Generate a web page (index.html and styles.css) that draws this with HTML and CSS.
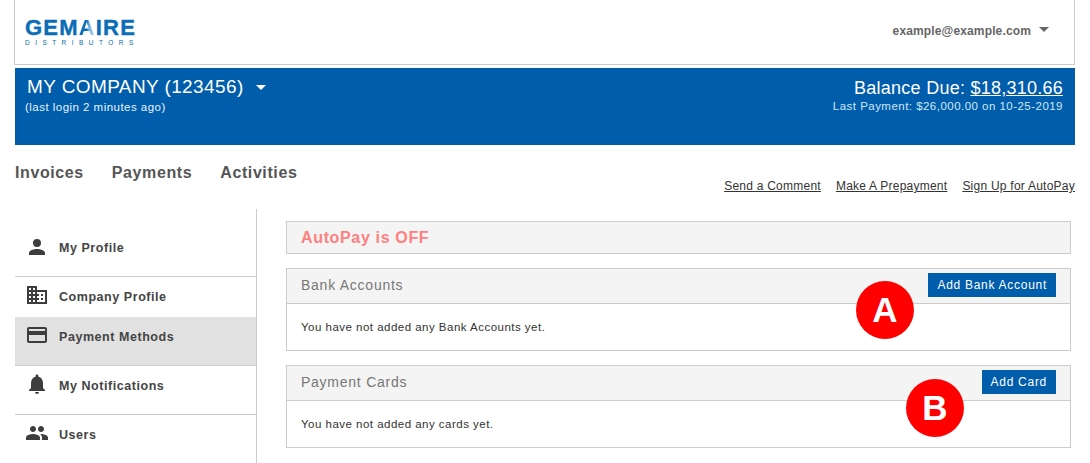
FILE: index.html
```html
<!DOCTYPE html>
<html lang="en">
<head>
<meta charset="utf-8">
<title>Payment Methods</title>
<link rel="stylesheet" href="styles.css">
</head>
<body>
<div class="page">
  <header class="topbar">
    <div class="logo">
      <div class="logo-main">GEM<span class="logo-a">A</span>IRE</div>
      <div class="logo-sub">DISTRIBUTORS</div>
    </div>
    <div class="user">example@example.com<span class="caret caret-grey"></span></div>
  </header>
  <section class="banner">
    <div>
      <div class="company">MY COMPANY (123456)<span class="caret caret-white"></span></div>
      <div class="login">(last login 2 minutes ago)</div>
    </div>
    <div class="balance">
      <div class="due">Balance Due: <a href="#">$18,310.66</a></div>
      <div class="last">Last Payment: $26,000.00 on 10-25-2019</div>
    </div>
  </section>
  <nav class="tabs">
    <div class="tab-list">
      <span>Invoices</span><span>Payments</span><span>Activities</span>
    </div>
    <div class="links">
      <a href="#">Send a Comment</a><a href="#">Make A Prepayment</a><a href="#">Sign Up for AutoPay</a>
    </div>
  </nav>
  <div class="content">
    <aside class="side">
      <div class="item item-profile">
        <svg class="icon" viewBox="0 0 24 24"><path d="M12 12a4 4 0 1 0 0-8 4 4 0 0 0 0 8zm0 2c-2.7 0-8 1.3-8 4v2h16v-2c0-2.7-5.300-4-8-4z"/></svg>
        <span>My Profile</span>
      </div>
      <div class="item item-company">
        <svg class="icon" viewBox="0 0 24 24"><path d="M12 7V3H2v18h20V7H12zM6 19H4v-2h2v2zm0-4H4v-2h2v2zm0-4H4V9h2v2zm0-4H4V5h2v2zm4 12H8v-2h2v2zm0-4H8v-2h2v2zm0-4H8V9h2v2zm0-4H8V5h2v2zm10 12h-8v-2h2v-2h-2v-2h2v-2h-2V9h8v10zm-2-8h-2v2h2v-2zm0 4h-2v2h2v-2z"/></svg>
        <span>Company Profile</span>
      </div>
      <div class="item item-payment">
        <svg class="icon" viewBox="0 0 24 24"><path d="M20 4H4c-1.110 0-2 .89-2 2v12c0 1.110.89 2 2 2h16c1.110 0 2-.89 2-2V6c0-1.110-.89-2-2-2zm0 14H4v-6h16v6zm0-10H4V6h16v2z"/></svg>
        <span>Payment Methods</span>
      </div>
      <div class="item item-notify">
        <svg class="icon" viewBox="0 0 24 24"><path d="M12 22c1.100 0 2-.9 2-2h-4c0 1.100.9 2 2 2zm6-6v-5c0-3.070-1.630-5.640-4.500-6.320V4c0-.83-.67-1.500-1.500-1.500s-1.500.67-1.500 1.500v.68C7.640 5.360 6 7.920 6 11v5l-2 2v1h16v-1l-2-2z"/></svg>
        <span>My Notifications</span>
      </div>
      <div class="item item-users">
        <svg class="icon" viewBox="0 0 24 24"><path d="M16 11c1.660 0 2.990-1.340 2.990-3S17.660 5 16 5s-3 1.340-3 3 1.340 3 3 3zm-8 0c1.660 0 2.990-1.340 2.990-3S9.660 5 8 5 5 6.340 5 8s1.340 3 3 3zm0 2c-2.330 0-7 1.170-7 3.500V19h14v-2.500c0-2.330-4.670-3.500-7-3.500zm8 0c-.29 0-.62.02-.97.050 1.160.84 1.970 1.970 1.970 3.450V19h6v-2.500c0-2.330-4.670-3.500-7-3.500z"/></svg>
        <span>Users</span>
      </div>
    </aside>
    <main class="main">
      <div class="autopay">AutoPay is OFF</div>
      <section class="panel">
        <div class="panel-head">
          <h2>Bank Accounts</h2>
          <button class="btn">Add Bank Account</button>
        </div>
        <p class="panel-body">You have not added any Bank Accounts yet.</p>
      </section>
      <section class="panel">
        <div class="panel-head">
          <h2>Payment Cards</h2>
          <button class="btn">Add Card</button>
        </div>
        <p class="panel-body">You have not added any cards yet.</p>
      </section>
    </main>
  </div>
  <div class="marker marker-a">A</div>
  <div class="marker marker-b">B</div>
</div>
</body>
</html>
```
FILE: styles.css
```css
* { box-sizing: border-box; }
html, body { margin: 0; height: 463px; overflow: hidden; background: #fff; }
body { font-family: "Liberation Sans", Arial, sans-serif; color: #444; }
.page { position: relative; height: 463px; padding-right: 15px; padding-left: 15px; }

.topbar {
  height: 65px;
  margin-left: -1px;
  border: 1px solid #ccc;
  border-top: 0;
  display: flex;
  justify-content: space-between;
  padding: 20px 25px 0 10px;
}
.logo { color: #0a6db5; width: 112px; }
.logo-main { font-size: 22px; font-weight: 700; line-height: 15px; letter-spacing: 1.2px; white-space: nowrap; -webkit-text-stroke: .4px #0a6db5; }
.logo-a {
  background: linear-gradient(90deg, #0a6db5 0 45%, #6fb4e4 60%, #c9e3f5 100%);
  -webkit-background-clip: text;
  background-clip: text;
  color: transparent;
  -webkit-text-stroke: 0;
}
.logo-sub { font-size: 6.5px; line-height: 7px; margin-top: 4px; letter-spacing: 5.45px; white-space: nowrap; }
.user { font-size: 12px; font-weight: 700; color: #666; letter-spacing: .14px; line-height: 14px; padding-top: 4px; }
.caret { display: inline-block; width: 0; height: 0; border-left: 5px solid transparent; border-right: 5px solid transparent; }
.caret-grey { border-top: 5px solid #666; margin-left: 8px; vertical-align: 3px; }
.caret-white { border-top: 5px solid #fff; margin-left: 12px; vertical-align: 3px; }

.banner {
  height: 77px;
  margin-top: 3px;
  background: #005dab;
  color: #fff;
  display: flex;
  justify-content: space-between;
  padding: 8px 12px 0 12px;
}
.company { font-size: 19px; line-height: 21px; letter-spacing: .4px; }
.login { font-size: 11.500px; line-height: 14px; margin-top: 3px; letter-spacing: .47px; margin-left: -2px; color: #e6f3fb; }
.balance { text-align: right; }
.due { font-size: 18px; line-height: 24px; letter-spacing: .25px; }
.due a { color: #fff; }
.last { font-size: 11.500px; line-height: 13px; letter-spacing: .47px; color: #cfe8f8; }

.tabs { display: flex; justify-content: space-between; align-items: flex-start; padding-top: 18px; height: 64px; }
.tab-list { display: flex; gap: 28px; font-size: 16px; font-weight: 700; line-height: 19px; letter-spacing: .6px; color: #555; }
.links { display: flex; gap: 15px; font-size: 12px; line-height: 14px; letter-spacing: .24px; padding-top: 16px; }
.links a { color: #333; }

.content { display: flex; }
.side { width: 242px; height: 254px; border-right: 1px solid #ccc; flex: none; }
.item { display: flex; align-items: flex-start; font-size: 12.500px; font-weight: 700; letter-spacing: .55px; color: #444; border-bottom: 1px solid #ccc; }
.item span { line-height: 15px; margin-left: 10px; }
.icon { width: 24px; height: 24px; fill: #3d3d3d; flex: none; margin-left: 10px; }
.item-profile { height: 68px; padding-top: 26px; }
.item-profile span { padding-top: 6px; }
.item-company { height: 40px; padding-top: 6px; border-bottom: 0; }
.item-company span { padding-top: 7px; }
.item-payment { height: 49px; padding-top: 6px; background: #e1e1e1; }
.item-payment span { padding-top: 7px; }
.item-notify { height: 49px; padding-top: 6px; }
.item-notify span { padding-top: 7px; }
.item-users { border-bottom: 0; padding-top: 6px; }
.item-users span { padding-top: 7px; }

.main { width: 785px; margin-left: 29px; padding-top: 12px; }
.autopay {
  height: 33px;
  border: 1px solid #ccc;
  background: #f4f4f4;
  color: #ff8080;
  font-size: 16px;
  font-weight: 700;
  letter-spacing: .65px;
  line-height: 31px;
  padding-left: 14px;
}
.panel { height: 83px; border: 1px solid #ccc; margin-top: 14px; }
.panel-head {
  height: 35px;
  background: #f4f4f4;
  border-bottom: 1px solid #ccc;
  display: flex;
  justify-content: space-between;
  align-items: flex-start;
  padding: 4px 14px 0 14px;
}
.panel-head h2 { margin: 0; font-size: 14px; font-weight: 400; color: #777; letter-spacing: .75px; line-height: 24px; }
.btn {
  height: 24px;
  border: 0;
  background: #005dab;
  color: #fff;
  font-family: inherit;
  font-size: 12px;
  letter-spacing: .72px;
  padding: 0 9px;
}
.panel-body { margin: 0; font-size: 11.500px; letter-spacing: .48px; line-height: 14px; padding: 16px 14px 0; color: #333; }

.marker {
  position: absolute;
  width: 58px;
  height: 58px;
  border-radius: 50%;
  background: #f00;
  color: #fff;
  font-size: 35px;
  font-weight: 700;
  line-height: 58px;
  text-align: center;
}
.marker-a { left: 856px; top: 281px; }
.marker-b { left: 906px; top: 379px; }
```
